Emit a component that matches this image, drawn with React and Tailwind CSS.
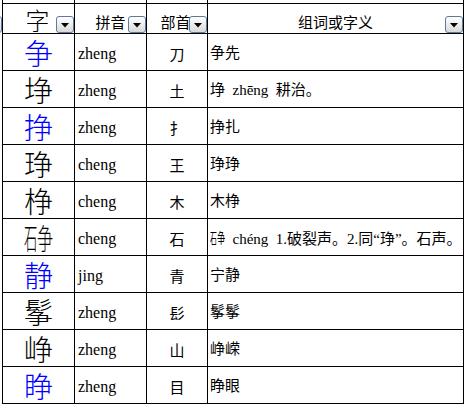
import React from 'react';

const FONT = { fontFamily: '"Liberation Serif", "Noto Sans CJK SC", serif' };
const CJK = { fontFamily: '"Noto Sans CJK SC", "Liberation Serif", sans-serif' };

// 石 + 争 has no common code point, so squeeze the two glyphs side by side
function ShiZheng() {
  return (
    <span className="inline-flex" style={CJK}>
      <span className="inline-block w-[0.46em] overflow-hidden">
        <span className="inline-block origin-left scale-x-[0.46]">石</span>
      </span>
      <span className="inline-block w-[0.56em] overflow-hidden -ml-[0.02em]">
        <span className="inline-block origin-left scale-x-[0.56]">争</span>
      </span>
    </span>
  );
}

const ROWS = [
  { zi: '争', blue: true, py: 'zheng', bs: '刀', yi: '争先' },
  { zi: '埩', py: 'zheng', bs: '土', yi: '埩  zhēng  耕治。' },
  { zi: '挣', blue: true, py: 'zheng', bs: '扌', yi: '挣扎' },
  { zi: '琤', py: 'cheng', bs: '王', yi: '琤琤' },
  { zi: '棦', py: 'cheng', bs: '木', yi: '木棦' },
  { zi: <ShiZheng />, py: 'cheng', bs: '石', yi: <><ShiZheng />{'  chéng  1.破裂声。2.同“琤”。石声。'}</> },
  { zi: '静', blue: true, py: 'jing', bs: '青', yi: '宁静' },
  { zi: '鬇', py: 'zheng', bs: '髟', yi: '鬇鬇' },
  { zi: '峥', py: 'zheng', bs: '山', yi: '峥嵘' },
  { zi: '睁', blue: true, py: 'zheng', bs: '目', yi: '睁眼' },
];

function FilterBtn({ className = '' }) {
  return (
    <span className={`absolute w-[18px] h-[17px] rounded-[3px] border border-[#5f7a9e] bg-gradient-to-b from-[#ffffff] to-[#d9d9d9] flex items-center justify-center ${className}`}>
      <svg width="8" height="5" viewBox="0 0 8 5" className="mt-[2px]">
        <polygon points="0,0 8,0 4,4.5" fill="#000" />
      </svg>
    </span>
  );
}

const cell = 'relative border-r border-b border-black';

export default function App() {
  return (
    <div className="relative w-[466px] h-[404px] overflow-hidden bg-white text-black" style={FONT}>
      {/* bit of the previous column's filter button */}
      <FilterBtn className="left-[-16px] top-[16px]" />

      <div className="ml-[2px] w-[462px] border-l border-black">
        {/* row cut off at the top */}
        <div className="grid grid-cols-[72px_72px_61px_256px] h-[4px]">
          <div className={cell} /><div className={cell} /><div className={cell} /><div className={cell} />
        </div>

        {/* header */}
        <div className="grid grid-cols-[72px_72px_61px_256px] h-[30px]" style={CJK}>
          <div className={`${cell} flex items-end justify-center pb-[1px]`}>
            <span className="text-[24px] leading-none font-light mr-[2px]">字</span>
            <FilterBtn className="right-0 bottom-0" />
          </div>
          <div className={`${cell} flex items-end justify-center pb-[4px]`}>
            <span className="text-[15px] leading-none">拼音</span>
            <FilterBtn className="right-0 bottom-0" />
          </div>
          <div className={`${cell} flex items-end justify-center pb-[4px]`}>
            <span className="text-[15px] leading-none mr-[3px]">部首</span>
            <FilterBtn className="right-0 bottom-0" />
          </div>
          <div className={`${cell} flex items-end justify-center pb-[4px]`}>
            <span className="text-[15px] leading-none">组词或字义</span>
            <FilterBtn className="right-0 bottom-0" />
          </div>
        </div>

        {ROWS.map((r, i) => (
          <div key={i} className="grid grid-cols-[72px_72px_61px_256px] h-[37px]">
            <div className={`${cell} flex items-center justify-center`}>
              <span className={`text-[29px] leading-none font-light ${r.blue ? 'text-[#0000ff]' : 'text-black'}`} style={CJK}>{r.zi}</span>
            </div>
            <div className={`${cell} flex items-center pl-[3px] pt-[3px]`}>
              <span className="text-[16px] leading-none">{r.py}</span>
            </div>
            <div className={`${cell} flex items-center justify-center pt-[2px]`}>
              <span className="text-[15px] leading-none" style={CJK}>{r.bs}</span>
            </div>
            <div className={`${cell} flex items-center pl-[2px] pt-[3px]`}>
              <span className="text-[15px] leading-none whitespace-pre">{r.yi}</span>
            </div>
          </div>
        ))}
      </div>
    </div>
  );
}
